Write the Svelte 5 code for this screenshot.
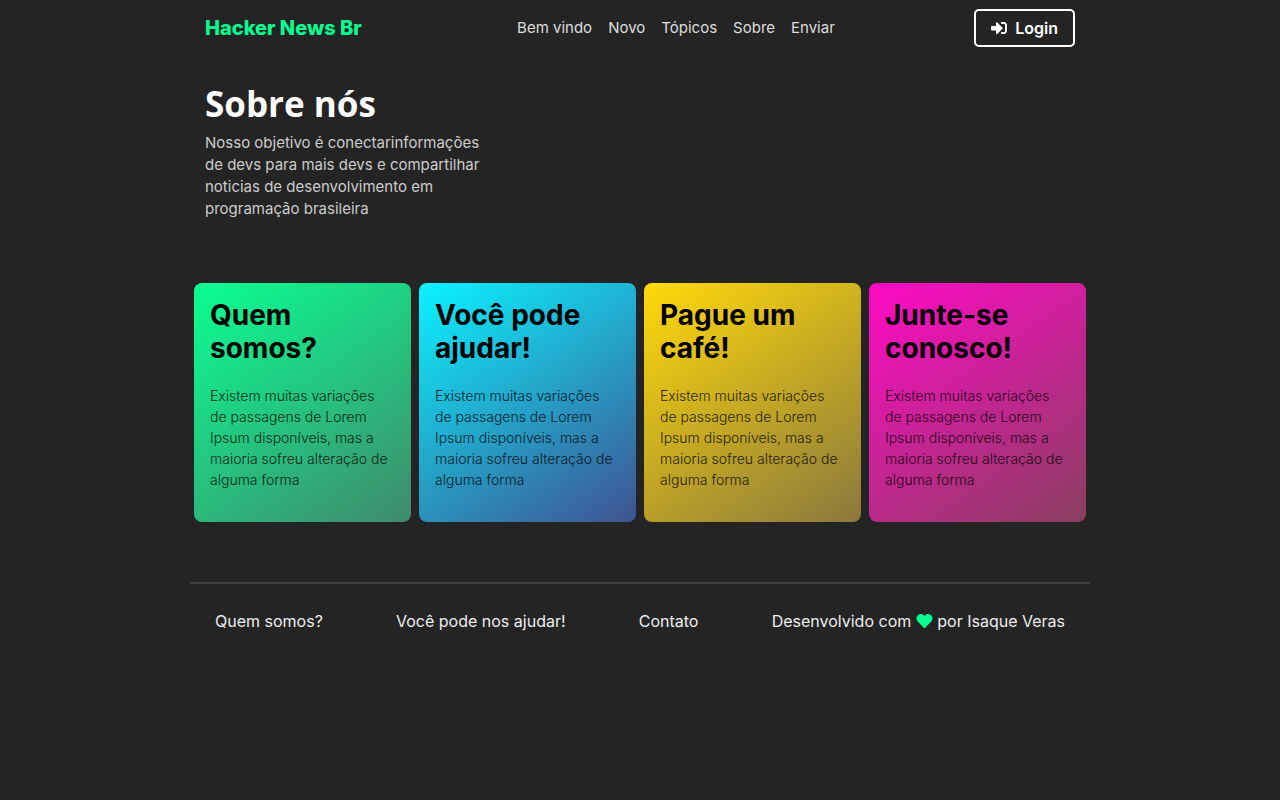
<script>
  const links = ['Bem vindo', 'Novo', 'Tópicos', 'Sobre', 'Enviar'];
  const text =
    'Existem muitas variações de passagens de Lorem Ipsum disponíveis, mas a maioria sofreu alteração de alguma forma';
  const cards = [
    { title: 'Quem somos?', tone: 'green' },
    { title: 'Você pode ajudar!', tone: 'blue' },
    { title: 'Pague um café!', tone: 'yellow' },
    { title: 'Junte-se conosco!', tone: 'pink' }
  ];
</script>

<div class="container">
  <header>
    <a class="brand" href="#inicio">Hacker News Br</a>
    <nav>
      {#each links as link}
        <a href="#{link}">{link}</a>
      {/each}
    </nav>
    <button type="button" class="login">
      <svg viewBox="0 0 512 512" aria-hidden="true">
        <path d="M416 448h-84c-6.600 0-12-5.400-12-12v-40c0-6.600 5.400-12 12-12h84c17.700 0 32-14.300 32-32V160c0-17.700-14.300-32-32-32h-84c-6.600 0-12-5.400-12-12V76c0-6.600 5.400-12 12-12h84c53 0 96 43 96 96v192c0 53-43 96-96 96zm-47-201L201 79c-15-15-41-4.500-41 17v96H24c-13.300 0-24 10.700-24 24v96c0 13.300 10.700 24 24 24h136v96c0 21.500 26 32 41 17l168-168c9.300-9.400 9.300-24.600 0-34z" />
      </svg>
      Login
    </button>
  </header>

  <main>
    <section class="about">
      <h1>Sobre nós</h1>
      <p>
        Nosso objetivo é conectarinformações de devs para mais devs e compartilhar noticias de
        desenvolvimento em programação brasileira
      </p>
    </section>

    <section class="cards">
      {#each cards as card}
        <article class="card {card.tone}">
          <h2>{card.title}</h2>
          <p>{text}</p>
        </article>
      {/each}
    </section>
  </main>

  <footer>
    <a href="#quem-somos">Quem somos?</a>
    <a href="#ajudar">Você pode nos ajudar!</a>
    <a href="#contato">Contato</a>
    <span>
      Desenvolvido com
      <svg viewBox="0 0 512 512" aria-hidden="true">
        <path d="M462.300 62.600C407.500 15.900 326 24.300 275.700 76.200L256 96.500l-19.700-20.300C186.100 24.300 104.500 15.900 49.700 62.600c-62.800 53.600-66.100 149.800-9.900 207.900l193.500 199.800c12.500 12.900 32.800 12.900 45.300 0l193.500-199.800c56.300-58.100 53-154.300-9.800-207.900z" />
      </svg>
      por Isaque Veras
    </span>
  </footer>
</div>

<style>
  :global(body) {
    background: #242424;
    color: #fff;
    font-family: Inter, sans-serif;
  }

  a {
    color: inherit;
    text-decoration: none;
  }

  .container {
    max-width: 900px;
    margin: 0 auto;
  }

  header {
    display: flex;
    align-items: center;
    justify-content: space-between;
    padding: 9px 15px;
  }

  .brand {
    color: #0aff91;
    font-size: 20px;
    font-weight: 800;
  }

  nav {
    display: flex;
    gap: 16px;
    padding: 0 0 2px 16px;
    color: #dedede;
    font-size: 15px;
  }

  .login {
    display: flex;
    align-items: center;
    gap: 8px;
    height: 38px;
    padding: 0 15px;
    border: 2px solid #fff;
    border-radius: 5px;
    background: transparent;
    color: #fff;
    font: 600 16px Inter, sans-serif;
  }

  .login svg {
    width: 16px;
    height: 16px;
    fill: currentColor;
  }

  .about {
    padding: 24px 15px 0;
  }

  h1 {
    margin: 0;
    font: 700 35px/48px "Open Sans", sans-serif;
  }

  .about p {
    max-width: 280px;
    margin: 4px 0 0;
    color: #ccc;
    font-size: 15px;
    line-height: 22px;
  }

  .cards {
    display: grid;
    grid-template-columns: repeat(4, 1fr);
    gap: 8px;
    padding: 63px 4px 60px;
  }

  .card {
    padding: 16px 20px 32px 16px;
    border-radius: 8px;
    color: #000;
  }

  .green {
    background: linear-gradient(145deg, #0aff91, #408a6d);
  }

  .blue {
    background: linear-gradient(145deg, #0af3ff, #405291);
  }

  .yellow {
    background: linear-gradient(145deg, #ffd90a, #8a783e);
  }

  .pink {
    background: linear-gradient(145deg, #ff0ac6, #8a3f60);
  }

  h2 {
    margin: 0;
    font-size: 28px;
    font-weight: 700;
    line-height: 33px;
  }

  .card p {
    margin: 20px 0 0;
    font-size: 14px;
    font-weight: 300;
    line-height: 21px;
    opacity: 0.8;
  }

  footer {
    display: flex;
    justify-content: space-between;
    padding: 26px 25px;
    border-top: 2px solid #404040;
    color: #eee;
    font-size: 16px;
    line-height: 22px;
  }

  footer svg {
    width: 17px;
    height: 16px;
    vertical-align: -2px;
    fill: #0aff91;
  }

  @media (max-width: 760px) {
    header,
    footer {
      flex-wrap: wrap;
      gap: 16px;
    }

    .cards {
      grid-template-columns: repeat(2, 1fr);
    }
  }
</style>
